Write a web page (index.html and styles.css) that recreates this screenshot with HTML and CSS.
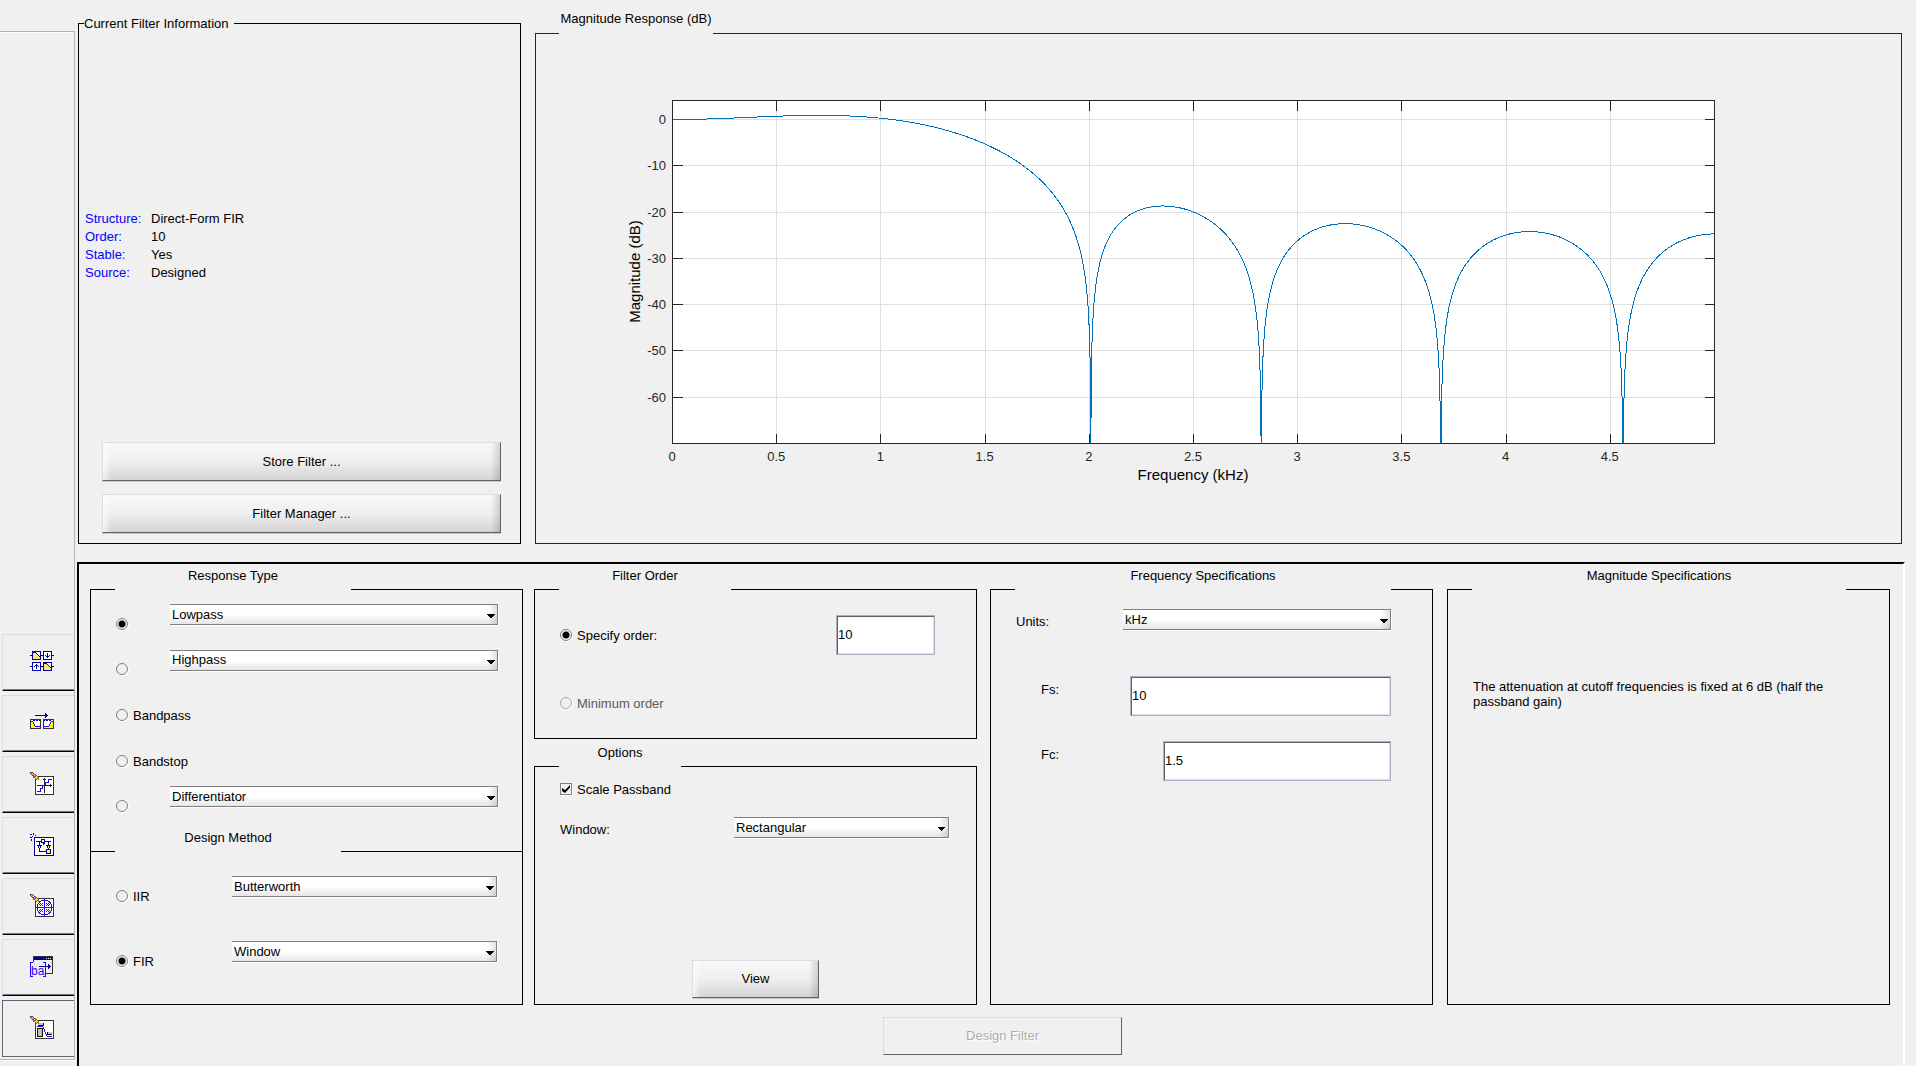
FILE: index.html
```html
<!DOCTYPE html>
<html lang="en">
<head>
<meta charset="utf-8">
<title>Filter Designer</title>
<link rel="stylesheet" href="styles.css">
</head>
<body>
<div class="app">
  <nav class="sidebar" aria-label="Design panels">
    <button class="tool" type="button" aria-label="Create a multirate filter">
      <svg class="icon" viewBox="0 0 24 24">
        <g fill="#fff" stroke="#00009c"><path d="M2.5 1.500h8v8h-8zM13.500 1.500h8v8h-8zM2.500 12.500h8v8h-8zM13.500 12.500h8v8h-8z"/></g>
        <path fill="#ffe76b" d="M3 3h3v1h1v1h1v1h1v1h1v2H3zM14 14h3v1h1v1h1v1h1v1h1v2h-7z"/>
        <g fill="none" stroke="#00009c"><path d="M0 5.500h2M11 5.500h2M22 5.500h2M0 16.500h2M11 16.500h2M22 16.500h2M3 2.500h3M6 3.500h1M7 4.500h1M8 5.500h1M9 6.500h1M14 13.500h3M17 14.500h1M18 15.500h1M19 16.500h1M20 17.500h1M17.500 3v5M15 5.500h1M19 5.500h1M16 6.500h3M6.500 14v5M5 15.500h3M4 16.500h1M8 16.500h1"/></g>
      </svg>
    </button>
    <button class="tool" type="button" aria-label="Transform filter">
      <svg class="icon" viewBox="0 0 24 24">
        <path fill="#fff" stroke="#333" d="M.5 8.500h10v9H.500zM13.500 8.500h10v9h-10z"/>
        <path fill="#ffff00" d="M1 11h2v2h1v2h1v1h5v1H1zM23 11h-2v2h-1v2h-1v1h-5v1h9z"/>
        <path fill="none" stroke="#3300ff" d="M1 10.500h2M3.500 11v2M4.500 13v2M5 15.500h5M23 10.500h-2M20.500 11v2M19.500 13v2M19 15.500h-5"/>
        <path fill="none" stroke="#00009c" d="M3 9.500h2M6 9.500h2M9 9.500h1M14 9.500h1M16 9.500h2M19 9.500h2M5 4.500h13M15 3.500h2M15 5.500h2M15 2.500h1M15 6.500h1"/>
      </svg>
    </button>
    <button class="tool" type="button" aria-label="Set quantization parameters">
      <svg class="icon" viewBox="0 0 24 24">
        <path fill="#fff" stroke="#333" d="M5.500 4.500h18v18h-18z"/>
        <path fill="none" stroke="#222" d="M14.500 6v15M7 13.500h15M13 7.500h3M20.500 12v3"/>
        <path fill="none" stroke="#3300ff" d="M7 19.500h3v-3h2v-3h3v-3h3v-3h4"/>
        <use href="#pencil"/>
      </svg>
    </button>
    <button class="tool" type="button" aria-label="Realize model">
      <svg class="icon" viewBox="0 0 24 24">
        <path fill="none" stroke="#00009c" d="M0 1.500h2M3.500 0v2M0 4.500h2M5 2.500h1M2 3.500h1M1.500 6v2"/>
        <path fill="#fff" stroke="#00009c" d="M4.500 4.500h19v18h-19z"/>
        <path fill="none" stroke="#00009c" d="M6 8.500h6M15 8.500h6M9.500 9v9M18.500 9v8M9 18.500h8M13.500 10v2M14.500 9v2"/>
        <path fill="#ffff00" stroke="#00009c" d="M7.500 12.500h4l-2 3zM16.500 12.500h4l-2 3zM16.500 16.500h4v4h-4z"/>
        <path fill="#fff" stroke="#00009c" d="M11.500 6.500h3v3h-3z"/>
      </svg>
    </button>
    <button class="tool" type="button" aria-label="Pole-zero editor">
      <svg class="icon" viewBox="0 0 24 24">
        <path fill="#fff" stroke="#333" d="M5.500 4.500h18v18h-18z"/>
        <circle cx="14.500" cy="13.500" r="7.500" fill="none" stroke="#3300ff"/>
        <path fill="none" stroke="#3300ff" d="M14.500 5v17M6 13.500h17"/>
        <path fill="none" stroke="#3300ff" stroke-dasharray="1 1" d="M10 9.500h4M9 10.500h4M10 11.500h4M16 9.500h4M17 10.500h4M16 11.500h4M10 15.500h4M9 16.500h4M10 17.500h4M16 15.500h4M17 16.500h4M16 17.500h4"/>
        <use href="#pencil"/>
      </svg>
    </button>
    <button class="tool" type="button" aria-label="Import filter">
      <svg class="icon" viewBox="0 0 24 24">
        <path fill="#efefef" stroke="#333" d="M3.500 1.500h19v17h-19z"/>
        <path fill="#00009c" d="M4 2h18v3H4z"/>
        <path fill="#fff" d="M16 3h1v1h-1zM18 3h1v1h-1zM20 3h1v1h-1z"/>
        <path fill="#efefef" d="M0 7h16v15H0z"/>
        <path fill="none" stroke="#3300ff" d="M3 7.500H.500v14H3M13 7.500h2.500v14H13"/>
        <text class="icon-text" x="1" y="20">ba</text>
        <path fill="none" stroke="#00009c" d="M9 11.500h12M18 10.500h2M18 12.500h2M18 9.500h1M18 13.500h1"/>
      </svg>
    </button>
    <button class="tool tool-active" type="button" aria-label="Design filter" aria-pressed="true">
      <svg class="icon" viewBox="0 0 24 24">
        <path fill="#fff" stroke="#333" d="M5.500 4.500h18v18h-18z"/>
        <path fill="#c0c0c0" stroke="#111" d="M7.500 12.500h5v8h-5z"/>
        <path fill="#c0c0c0" d="M9 7h5v2H9zM17 16h5v2h-5z"/>
        <path fill="none" stroke="#111" d="M8 9.500h6M13.500 7v3M17 18.500h5M17.500 16v2"/>
        <path fill="none" stroke="#3300ff" d="M7 10.500h6M13.500 11v2M14.500 13v3M15.500 16v2M16.500 18v2M17 20.500h5"/>
        <g id="pencil">
          <path fill="#8b2a2a" d="M0 0h3v1h1v1h1v3H3V4H2V3H1V2H0z"/>
          <path fill="#ffa0a0" d="M1 1h2v1h1v1H2V2H1z"/>
          <path fill="#666" d="M4 2h2v2H5v1H4v1H3V4h1z"/>
          <path fill="#e8e8e8" d="M4 3h1v1H4z"/>
          <path fill="#c05a00" d="M6 3h1v1h1v1h1v4H7V8H6V7H5V6H4V5h1V4h1z"/>
          <path fill="#ffd040" d="M6 4h1v1h1v1H7v1H6V6H5V5h1z"/>
          <path fill="#ffe9a8" d="M7 7h1v1h1v1H7z"/>
        </g>
      </svg>
    </button>
  </nav>

  <main class="main">
    <div class="top">
      <section class="panel info-panel">
        <h2 class="info-head"><span class="info-title">Current Filter Information</span></h2>
        <div class="panel-body info-body">
          <dl class="facts">
            <dt>Structure:</dt><dd>Direct-Form FIR</dd>
            <dt>Order:</dt><dd>10</dd>
            <dt>Stable:</dt><dd>Yes</dd>
            <dt>Source:</dt><dd>Designed</dd>
          </dl>
          <div class="info-actions">
            <button class="button" type="button">Store Filter ...</button>
            <button class="button" type="button">Filter Manager ...</button>
          </div>
        </div>
      </section>

      <section class="panel chart-panel">
        <h2 class="head chart-head"><span class="title">Magnitude Response (dB)</span></h2>
        <div class="panel-body chart-body">
          <svg class="plot" role="img" aria-label="Magnitude response in dB against frequency in kHz">
            <defs>
              <path id="tick-down" d="M0 0v10"/>
              <path id="tick-up" d="M0 0v-10"/>
              <path id="tick-right" d="M0 0h10"/>
              <path id="tick-left" d="M0 0h-10"/>
            </defs>
            <rect class="plot-area" width="100%" height="100%"/>
            <g transform="translate(.5 .5)">
              <g class="grid-lines">
                <line x1="10%" x2="10%" y1="0" y2="100%"/><line x1="20%" x2="20%" y1="0" y2="100%"/>
                <line x1="30%" x2="30%" y1="0" y2="100%"/><line x1="40%" x2="40%" y1="0" y2="100%"/>
                <line x1="50%" x2="50%" y1="0" y2="100%"/><line x1="60%" x2="60%" y1="0" y2="100%"/>
                <line x1="70%" x2="70%" y1="0" y2="100%"/><line x1="80%" x2="80%" y1="0" y2="100%"/>
                <line x1="90%" x2="90%" y1="0" y2="100%"/>
                <line x1="0" x2="100%" y1="5.54%" y2="5.54%"/><line x1="0" x2="100%" y1="19.04%" y2="19.04%"/>
                <line x1="0" x2="100%" y1="32.53%" y2="32.53%"/><line x1="0" x2="100%" y1="46.02%" y2="46.02%"/>
                <line x1="0" x2="100%" y1="59.52%" y2="59.52%"/><line x1="0" x2="100%" y1="73.01%" y2="73.01%"/>
                <line x1="0" x2="100%" y1="86.51%" y2="86.51%"/>
              </g>
              <g class="axes">
                <rect width="100%" height="100%"/>
                <use href="#tick-down" x="10%"/><use href="#tick-down" x="20%"/><use href="#tick-down" x="30%"/>
                <use href="#tick-down" x="40%"/><use href="#tick-down" x="50%"/><use href="#tick-down" x="60%"/>
                <use href="#tick-down" x="70%"/><use href="#tick-down" x="80%"/><use href="#tick-down" x="90%"/>
                <use href="#tick-up" x="10%" y="100%"/><use href="#tick-up" x="20%" y="100%"/><use href="#tick-up" x="30%" y="100%"/>
                <use href="#tick-up" x="40%" y="100%"/><use href="#tick-up" x="50%" y="100%"/><use href="#tick-up" x="60%" y="100%"/>
                <use href="#tick-up" x="70%" y="100%"/><use href="#tick-up" x="80%" y="100%"/><use href="#tick-up" x="90%" y="100%"/>
                <use href="#tick-right" y="5.54%"/><use href="#tick-right" y="19.04%"/><use href="#tick-right" y="32.53%"/>
                <use href="#tick-right" y="46.02%"/><use href="#tick-right" y="59.52%"/><use href="#tick-right" y="73.01%"/>
                <use href="#tick-right" y="86.51%"/>
                <use href="#tick-left" x="100%" y="5.54%"/><use href="#tick-left" x="100%" y="19.04%"/><use href="#tick-left" x="100%" y="32.53%"/>
                <use href="#tick-left" x="100%" y="46.02%"/><use href="#tick-left" x="100%" y="59.52%"/><use href="#tick-left" x="100%" y="73.01%"/>
                <use href="#tick-left" x="100%" y="86.51%"/>
              </g>
              <svg class="curve-box" width="100%" height="100%" viewBox="0 0 1042 343" preserveAspectRatio="none">
                <path id="curve" class="curve" vector-effect="non-scaling-stroke"/>
              </svg>
            </g>
            <g class="y-labels">
              <text x="-6" y="5.54%" dy="5">0</text><text x="-6" y="19.04%" dy="5">-10</text>
              <text x="-6" y="32.53%" dy="5">-20</text><text x="-6" y="46.02%" dy="5">-30</text>
              <text x="-6" y="59.52%" dy="5">-40</text><text x="-6" y="73.01%" dy="5">-50</text>
              <text x="-6" y="86.51%" dy="5">-60</text>
            </g>
            <g class="x-labels">
              <text x="0" y="100%" dy="18">0</text><text x="10%" y="100%" dy="18">0.5</text>
              <text x="20%" y="100%" dy="18">1</text><text x="30%" y="100%" dy="18">1.5</text>
              <text x="40%" y="100%" dy="18">2</text><text x="50%" y="100%" dy="18">2.5</text>
              <text x="60%" y="100%" dy="18">3</text><text x="70%" y="100%" dy="18">3.5</text>
              <text x="80%" y="100%" dy="18">4</text><text x="90%" y="100%" dy="18">4.5</text>
            </g>
            <text class="axis-title" x="50%" y="100%" dy="37">Frequency (kHz)</text>
            <svg class="y-title-box" y="50%">
              <text class="axis-title" transform="rotate(-90)" x="0" y="-32">Magnitude (dB)</text>
            </svg>
          </svg>
        </div>
      </section>
    </div>

    <form class="design">
      <div class="groups">
        <section class="panel response">
          <h2 class="head response-head"><span class="title">Response Type</span></h2>
          <div class="panel-body response-body">
            <div class="type-rows">
              <div class="type-row"><label class="choice"><input class="radio" type="radio" name="type" aria-label="Lowpass type" checked></label>
                <select class="select" aria-label="Lowpass type"><option>Lowpass</option></select></div>
              <div class="type-row"><label class="choice"><input class="radio" type="radio" name="type" aria-label="Highpass type"></label>
                <select class="select" aria-label="Highpass type"><option>Highpass</option></select></div>
              <div class="type-row"><label class="choice"><input class="radio" type="radio" name="type"><span>Bandpass</span></label></div>
              <div class="type-row"><label class="choice"><input class="radio" type="radio" name="type"><span>Bandstop</span></label></div>
              <div class="type-row"><label class="choice"><input class="radio" type="radio" name="type" aria-label="Other type"></label>
                <select class="select" aria-label="Other type"><option>Differentiator</option></select></div>
            </div>
          </div>
          <h2 class="head method-head"><span class="title">Design Method</span></h2>
          <div class="panel-body method-body">
            <div class="method-row"><label class="choice"><input class="radio" type="radio" name="method"><span>IIR</span></label>
              <select class="select" aria-label="IIR method"><option>Butterworth</option></select></div>
            <div class="method-row"><label class="choice"><input class="radio" type="radio" name="method" checked><span>FIR</span></label>
              <select class="select" aria-label="FIR method"><option>Window</option></select></div>
          </div>
        </section>

        <div class="order-column">
          <section class="panel">
            <h2 class="head order-head"><span class="title">Filter Order</span></h2>
            <div class="panel-body order-body">
              <div class="order-row"><label class="choice"><input class="radio" type="radio" name="order" checked><span>Specify order:</span></label>
                <input class="field order-field" type="text" value="10" aria-label="Filter order"></div>
              <div class="order-row"><label class="choice choice-off"><input class="radio" type="radio" name="order" disabled><span>Minimum order</span></label></div>
            </div>
          </section>
          <section class="panel options">
            <h2 class="head options-head"><span class="title">Options</span></h2>
            <div class="panel-body options-body">
              <label class="choice"><input class="checkbox" type="checkbox" checked><span>Scale Passband</span></label>
              <div class="window-row"><label class="window-label" for="window">Window:</label>
                <select class="select" id="window"><option>Rectangular</option></select></div>
              <button class="button view-button" type="button">View</button>
            </div>
          </section>
        </div>

        <section class="panel frequency">
          <h2 class="head frequency-head"><span class="title">Frequency Specifications</span></h2>
          <div class="panel-body frequency-body">
            <div class="units-row"><label class="units-label" for="units">Units:</label>
              <select class="select" id="units"><option>kHz</option></select></div>
            <div class="value-row"><label class="fs-label" for="fs">Fs:</label><input class="field" id="fs" type="text" value="10"></div>
            <div class="value-row"><label class="fc-label" for="fc">Fc:</label><input class="field" id="fc" type="text" value="1.5"></div>
          </div>
        </section>

        <section class="panel magnitude">
          <h2 class="head magnitude-head"><span class="title">Magnitude Specifications</span></h2>
          <div class="panel-body magnitude-body">
            <p class="note">The attenuation at cutoff frequencies is fixed at 6 dB (half the passband gain)</p>
          </div>
        </section>
      </div>
      <div class="design-actions"><button class="button design-button" type="button" disabled>Design Filter</button></div>
    </form>
  </main>
</div>
<script src="script.js"></script>
</body>
</html>
```
FILE: styles.css
```css
* { box-sizing: border-box; }

body {
  margin: 0;
  background: #f0f0f0;
  color: #000;
  font: 13px/16px "Liberation Sans", Arial, sans-serif;
}

h2, p, dl, dd { margin: 0; font-size: 13px; font-weight: 400; }
button, select, input { font: inherit; color: inherit; margin: 0; border-radius: 0; }

.app {
  display: grid;
  grid-template-columns: 76px minmax(0, 1fr);
  min-height: 100vh;
}

/* Tool strip */
.sidebar {
  display: flex;
  flex-direction: column;
  justify-content: flex-end;
  gap: 4px;
  margin: 31px 0 6px;
  padding: 0 0 2px 2px;
  border: solid #b4b4b4;
  border-width: 1px 1px 1px 0;
  box-shadow: 0 1px #fff, inset 0 1px #fff;
  width: 75px;
}

.tool {
  display: flex;
  align-items: center;
  height: 57px;
  padding: 0 0 2px 27px;
  border: 1px solid #dcdce6;
  border-right: 0;
  border-bottom: 1px solid #000;
  background: #f0f0f0;
  box-shadow: inset 0 -1px #777, 0 1px #f7eef7;
}

.tool-active { border-color: #636670; box-shadow: none; }

.icon { width: 24px; height: 24px; overflow: visible; shape-rendering: crispEdges; }
.icon-text { fill: #3300ff; font-size: 12px; }

/* Page regions */
.main {
  display: grid;
  grid-template-rows: minmax(auto, 544fr) minmax(auto, 504fr);
  row-gap: 18px;
}

.top {
  display: grid;
  grid-template-columns: minmax(0, 443fr) minmax(0, 1367fr);
  column-gap: 14px;
  padding: 0 14px 0 2px;
}

/* Panels with a broken top edge for the title */
.panel { display: flex; flex-direction: column; }
.panel-body { flex: 1; border: solid #000; border-width: 0 1px 1px; }

.head { display: flex; height: 22px; }
.head::before { content: ""; width: 25px; border-bottom: 1px solid #000; }
.head::after { content: ""; flex: 1; border-bottom: 1px solid #000; }
.title { text-align: center; }

.info-panel { padding-top: 16px; }
.info-head { display: flex; align-items: flex-end; }
.info-head::before, .info-head::after { content: ""; height: 8px; border-top: 1px solid #000; }
.info-head::before { width: 5px; border-left: 1px solid #000; }
.info-head::after { flex: 1; border-right: 1px solid #000; }
.info-title { width: 150px; }

.info-body { display: flex; flex-direction: column; padding-bottom: 10px; }
.facts {
  flex: 1;
  display: grid;
  grid-template-columns: 66px 1fr;
  align-content: center;
  padding: 18px 0 0 6px;
  line-height: 18px;
}
.facts dt { color: #0000ff; }
.info-actions { display: flex; flex-direction: column; gap: 13px; padding: 0 19px 0 23px; }

.button {
  height: 39px;
  padding: 0;
  border: 1px solid #5f616b;
  border-top-color: #dcdce6;
  border-left-color: #dcdce6;
  background:
    linear-gradient(to right, #ffffffb0, #ffffff00 8px),
    linear-gradient(to left, #00000026, #00000000 9px),
    linear-gradient(#f8f8f8, #efefef 50%, #d4d4d4);
  box-shadow: 0 1px #c8c8cc;
}

/* Chart */
.chart-panel { padding-top: 11px; }
.chart-head { height: 23px; }
.chart-head::before { width: 24px; border-color: #262626; }
.chart-head::after { border-color: #262626; }
.chart-head .title { width: 154px; }
.chart-body { display: flex; padding: 66px 187px 100px 136px; border-color: #262626; }
.plot { flex: 1; min-width: 0; min-height: 200px; height: auto; overflow: visible; }
.plot-area { fill: #fff; }
.grid-lines { stroke: #dfdfdf; shape-rendering: crispEdges; }
.axes { stroke: #262626; fill: none; shape-rendering: crispEdges; }
.curve { fill: none; stroke: #0072bd; shape-rendering: crispEdges; }
.curve-box { overflow: hidden; }
.y-title-box { overflow: visible; }
.y-labels { text-anchor: end; fill: #262626; }
.x-labels { text-anchor: middle; fill: #262626; }
.axis-title { text-anchor: middle; font-size: 15px; }

/* Design form */
.design {
  display: flex;
  flex-direction: column;
  margin: 0 11px 0 1px;
  padding: 4px 13px 11px 11px;
  border: 2px solid #000;
  border-right-color: #fff;
  border-bottom: 0;
}

.groups {
  flex: 1;
  display: grid;
  grid-template-columns: minmax(0, 433fr) 11px minmax(0, 443fr) 13px minmax(0, 443fr) 14px minmax(0, 443fr);
}
.response { grid-column: 1; }
.order-column { grid-column: 3; display: flex; flex-direction: column; gap: 6px; }
.frequency { grid-column: 5; }
.magnitude { grid-column: 7; }

.response-head .title { width: 236px; }
.method-head { border: solid #000; border-width: 0 1px; }
.method-head::before { width: 24px; }
.method-head .title { width: 226px; }
.order-head .title { width: 172px; }
.options-head .title { width: 122px; }
.frequency-head .title { width: 376px; }
.magnitude-head .title { width: 374px; }

.choice { display: flex; align-items: center; gap: 5px; }
.choice span { padding-top: 2px; white-space: nowrap; }
.choice-off { color: #5a5a5a; }

.radio, .checkbox {
  appearance: none;
  flex: none;
  width: 12px;
  height: 12px;
  border: 1px solid #808080;
  background: #f0f0f0;
  box-shadow: 1px 1px #fff;
}
.radio { border-radius: 50%; }
.radio:checked { background: radial-gradient(circle, #000 3px, #f0f0f0 4px); }
.radio:disabled { border-color: #aaa; }
.checkbox::after {
  content: "";
  display: block;
  width: 8px;
  height: 8px;
  margin: 1px;
  background: #000;
  clip-path: polygon(0 38%, 38% 62%, 100% 0, 100% 30%, 38% 100%, 0 75%);
}

.select {
  appearance: none;
  flex: 1;
  min-width: 0;
  height: 21px;
  padding: 0 20px 0 2px;
  border: solid #808080;
  border-width: 1px 1px 1px 0;
  background:
    linear-gradient(45deg, #0000 50%, #000 50%) right 6px top 9px / 4px 4px no-repeat,
    linear-gradient(-45deg, #0000 50%, #000 50%) right 2px top 9px / 4px 4px no-repeat,
    linear-gradient(to left, #00000020, #0000 9px),
    linear-gradient(#fff 50%, #e6e6e6);
  box-shadow: 1px 1px #fff;
}
/* Downward arrow: two triangles that meet in the middle */
.select {
  background-image:
    linear-gradient(to top right, #0000 50%, #000 50%),
    linear-gradient(to top left, #0000 50%, #000 50%),
    linear-gradient(to left, #00000020, #0000 9px),
    linear-gradient(#fff 50%, #e6e6e6);
}

.field {
  height: 40px;
  min-width: 0;
  padding: 0 0 2px;
  border: 1px solid #adafc4;
  background: #fff;
  box-shadow: inset 1px 1px #5f616b, inset -1px -1px #dcdce6;
  text-indent: 1px;
}

.response-body { display: flex; flex-direction: column; border-bottom: 0; padding-top: 12px; }
.type-rows { flex: 1; display: flex; flex-direction: column; }
.type-row { flex: 1; display: grid; grid-template-columns: 54px minmax(0, 1fr); padding: 0 24px 2px 25px; min-height: 28px; }
.type-row .select { margin-top: 2px; }

.method-body { flex: none; padding: 12px 25px 10px; }
.method-row { display: grid; grid-template-columns: 116px minmax(0, 1fr); height: 65px; padding-bottom: 2px; }
.method-row .select { margin-top: 12px; }

.order-body { padding: 25px 41px 15px 25px; }
.order-row { display: flex; justify-content: space-between; height: 40px; }
.order-row + .order-row { margin-top: 28px; }
.order-field { width: 99px; }

.options { flex: 1; }
.options-body { display: flex; flex-direction: column; padding: 13px 27px 6px 25px; }
.window-row { display: flex; align-items: flex-end; margin-top: 19px; }
.window-label { width: 174px; }
.view-button { width: 127px; height: 38px; margin: auto 0 0 132px; }

.frequency-body { padding: 19px 41px 20px 25px; }
.units-row { display: flex; align-items: flex-end; margin-bottom: 46px; }
.units-label { width: 107px; }
.value-row { display: flex; margin-bottom: 25px; padding-left: 25px; }
.value-row label { padding-top: 6px; }
.value-row .field { flex: 1; }
.fs-label { width: 89px; }
.fc-label { width: 122px; }

.magnitude-body { padding: 89px 43px 20px 25px; }
.note { line-height: 15px; }

.design-actions { display: flex; justify-content: center; padding: 12px 0 0 25px; }
.design-button {
  width: 239px;
  height: 38px;
  background: #f0f0f0;
  color: #adadad;
  text-shadow: 1px 1px #fff;
  box-shadow: none;
}
```
FILE: script.js
```js
// Magnitude response of an order-10 rectangular-window lowpass filter.
const order = 10;
const sampleRate = 10;
const cutoff = 1.5;
const half = order / 2;

const taps = [];
for (let k = 0; k <= half; k++) {
  const wc = 2 * Math.PI * cutoff / sampleRate;
  taps.push(k === 0 ? wc / Math.PI : Math.sin(wc * k) / (Math.PI * k));
}

function amplitude(w) {
  let sum = taps[0];
  for (let k = 1; k <= half; k++) sum += 2 * taps[k] * Math.cos(k * w);
  return sum;
}

const width = 1042;
const height = 343;
const zeroY = 19;
const perDb = (height - zeroY) / 70;
const dc = amplitude(0);
const points = [];
const count = 8192;
for (let i = 0; i <= count; i++) {
  const db = 20 * Math.log10(Math.abs(amplitude(Math.PI * i / count) / dc) + 1e-9);
  const y = Math.min(zeroY - db * perDb, height + 20);
  points.push((width * i / count).toFixed(2) + " " + y.toFixed(2));
}
document.getElementById("curve").setAttribute("d", "M" + points.join("L"));
```
